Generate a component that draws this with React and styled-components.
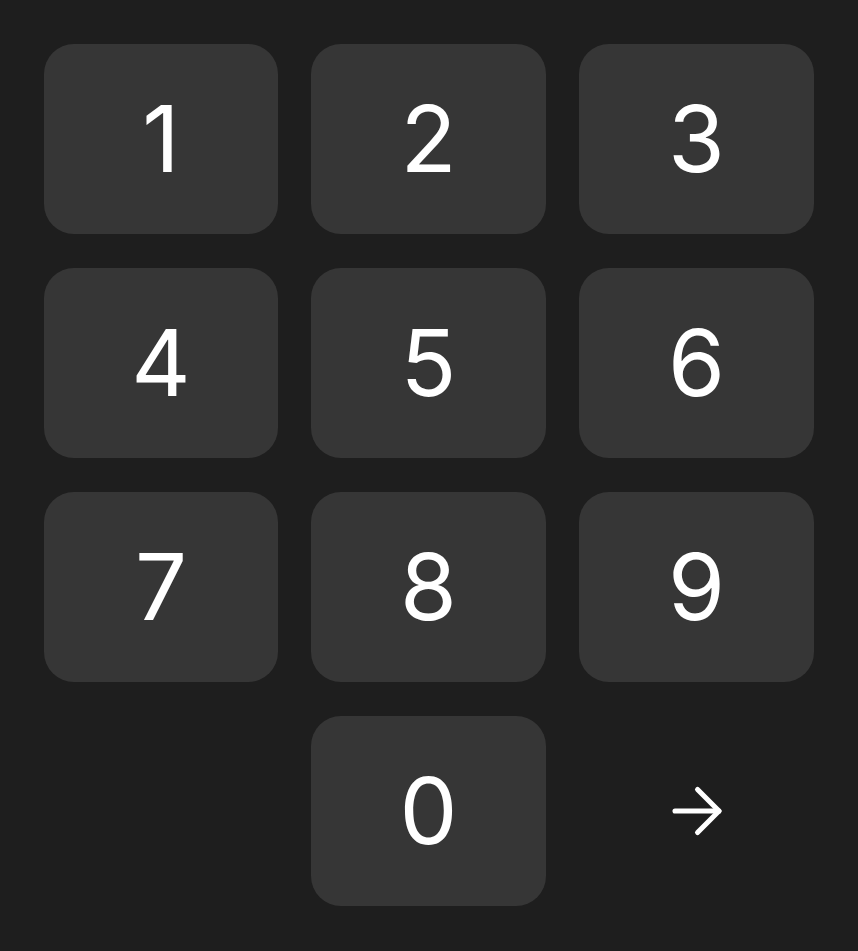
import React from "react";
import styled, { createGlobalStyle } from "styled-components";

const Global = createGlobalStyle`
  html, body {
    margin: 0;
    padding: 0;
    background: #1e1e1e;
  }
  body {
    font-family: Inter, "Noto Sans", sans-serif;
  }
`;

const Pad = styled.div`
  box-sizing: border-box;
  width: 858px;
  height: 951px;
  padding: 44px 44px 45px;
  display: grid;
  grid-template-columns: 234px 235px 235px;
  grid-template-rows: repeat(4, 190px);
  column-gap: 33px;
  row-gap: 34px;
  background: #1e1e1e;
`;

const Key = styled.button`
  border: none;
  margin: 0;
  padding: 0;
  border-radius: 30px;
  background: ${(p) => (p.$plain ? "transparent" : "#363636")};
  color: #ffffff;
  font-family: Inter, "Noto Sans", sans-serif;
  font-size: 92px;
  font-weight: 400;
  line-height: 1;
  display: flex;
  align-items: center;
  justify-content: center;
  cursor: pointer;
`;

const Blank = styled.div``;

const Arrow = () => (
  <svg width="66" height="66" viewBox="0 0 24 24" fill="none" stroke="#ffffff" strokeWidth="1.85" strokeLinecap="round" strokeLinejoin="round">
    <path d="M4 12h16" />
    <path d="M12.2 4.2l7.8 7.8-7.8 7.8" />
  </svg>
);

export default function App() {
  const digits = ["1", "2", "3", "4", "5", "6", "7", "8", "9"];
  return (
    <>
      <Global />
      <Pad>
        {digits.map((d) => (
          <Key key={d}>{d}</Key>
        ))}
        <Blank />
        <Key>0</Key>
        <Key $plain aria-label="Submit">
          <Arrow />
        </Key>
      </Pad>
    </>
  );
}
